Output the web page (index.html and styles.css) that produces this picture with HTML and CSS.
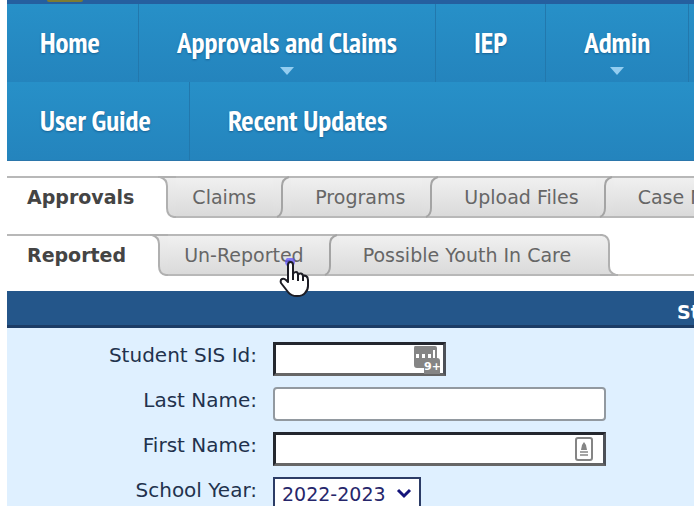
FILE: index.html
```html
<!DOCTYPE html>
<html lang="en">
<head>
    <meta charset="UTF-8">
    <meta name="viewport" content="width=device-width, initial-scale=1.0">
    <title>Approvals</title>
    <link rel="stylesheet" href="styles.css">
</head>
<body>
    <header class="banner">
        <span class="seal"></span>
    </header>

    <nav class="menu">
        <div class="menu-row">
            <a class="menu-item" href="#">Home</a>
            <a class="menu-item has-sub" href="#">Approvals and Claims</a>
            <a class="menu-item" href="#">IEP</a>
            <a class="menu-item has-sub" href="#">Admin</a>
        </div>
        <div class="menu-row">
            <a class="menu-item" href="#">User Guide</a>
            <a class="menu-item" href="#">Recent Updates</a>
        </div>
    </nav>

    <!-- shapes between two tabs -->
    <svg class="defs" width="0" height="0">
        <defs>
            <linearGradient id="tabFill" x1="0" y1="0" x2="0" y2="1">
                <stop offset="0" stop-color="#f0f0f0"/>
                <stop offset="1" stop-color="#dadada"/>
            </linearGradient>
            <symbol id="edge-selected" viewBox="0 0 18 42">
                <path d="M0 0H18V42H16Q9 40 9 32V10Q9 3 2 1H0Z" fill="url(#tabFill)"/>
                <path d="M0 1H18M2 1Q9 3 9 10V32Q9 40 16 41H18" fill="none" stroke="#b0b0b0" stroke-width="2"/>
            </symbol>
            <symbol id="edge-mid" viewBox="0 0 18 42">
                <rect width="18" height="42" fill="url(#tabFill)"/>
                <path d="M0 1H18M0 41H18" fill="none" stroke="#b8b8b8" stroke-width="2"/>
                <path d="M16 1Q9 3 9 10V32Q9 39 4 41" fill="none" stroke="#a4a4a4" stroke-width="2"/>
            </symbol>
            <symbol id="edge-last" viewBox="0 0 18 42">
                <path d="M0 0H2Q9 2 9 10V32Q9 39 16 41V42H0Z" fill="url(#tabFill)"/>
                <path d="M0 1H2Q9 2 9 10V32Q9 39 16 41H18M0 41H18" fill="none" stroke="#b0b0b0" stroke-width="2"/>
            </symbol>
        </defs>
    </svg>

    <div class="tabs main-tabs">
        <button class="tab selected">Approvals</button>
        <svg class="edge"><use href="#edge-selected"/></svg>
        <button class="tab next">Claims</button>
        <svg class="edge"><use href="#edge-mid"/></svg>
        <button class="tab">Programs</button>
        <svg class="edge"><use href="#edge-mid"/></svg>
        <button class="tab">Upload Files</button>
        <svg class="edge"><use href="#edge-mid"/></svg>
        <button class="tab">Case M</button>
    </div>

    <div class="tabs sub-tabs">
        <button class="tab selected">Reported</button>
        <svg class="edge"><use href="#edge-selected"/></svg>
        <button class="tab next">Un-Reported
            <svg class="pointer" width="32" height="40" viewBox="0 0 32 40">
                <circle cx="11" cy="4" r="5" fill="#5a4dff" opacity=".7"/>
                <path d="M9 24V7Q9 4 11.500 4Q14 4 14 7V16Q15 14 17 14Q19 14 19 17Q20 15 22 15.500Q24 16 24 18.500Q25 17 27 18Q29 19 29 22V28Q29 32 26 35Q24 38 18 38Q12 38 9 34L2 25Q1 22 3 21Q5 20 7 22Z" fill="#fff" stroke="#1c1c24" stroke-width="2" stroke-linejoin="round"/>
                <path d="M14 15V22M19 16V23M24 18V23" stroke="#1c1c24" stroke-width="2"/>
            </svg>
        </button>
        <svg class="edge"><use href="#edge-mid"/></svg>
        <button class="tab last">Possible Youth In Care</button>
        <svg class="edge"><use href="#edge-last"/></svg>
        <span class="tabs-rest"></span>
    </div>

    <main class="panel">
        <h2 class="panel-title"><span>St</span></h2>
        <form class="search">
            <label for="sisId">Student SIS Id:</label>
            <div class="field short">
                <input type="text" id="sisId" class="required">
                <svg class="field-icon" width="28" height="30" viewBox="0 0 28 30">
                    <path d="M2 1H22Q24 1 24 3V13Q27 13 27 16V29H11V23H4Q1 23 1 20V3Q1 1 2 1Z" fill="#858585"/>
                    <path d="M3 9H6V13H3ZM9 9H12V13H9ZM15 9H18V13H15ZM20 5H22V13H20Z" fill="#fff"/>
                    <text x="11" y="25" class="badge-text">9+</text>
                </svg>
            </div>

            <label for="lastName">Last Name:</label>
            <div class="field">
                <input type="text" id="lastName">
            </div>

            <label for="firstName">First Name:</label>
            <div class="field">
                <input type="text" id="firstName" class="required">
                <svg class="field-icon card-icon" width="18" height="24" viewBox="0 0 18 24">
                    <rect x="1" y="1" width="16" height="22" rx="2" fill="#fff" stroke="#858585" stroke-width="2"/>
                    <path d="M9 5L11 8L12 13H6L7 8Z" fill="#858585"/>
                    <path d="M5 15H13M5 18H13" stroke="#a5a5a5" stroke-width="2"/>
                </svg>
            </div>

            <label for="schoolYear">School Year:</label>
            <div class="field year">
                <select id="schoolYear">
                    <option>2022-2023</option>
                </select>
                <svg class="chevron" width="16" height="12" viewBox="0 0 16 12">
                    <path d="M2 2L8 8L14 2" fill="none" stroke="#14147a" stroke-width="3"/>
                </svg>
            </div>
        </form>
    </main>
</body>
</html>
```

FILE: styles.css
```css
* {
    box-sizing: border-box;
}

body {
    margin: 0;
    padding-left: 7px;
    background: #fff;
    font-family: "DejaVu Sans", Verdana, sans-serif;
    font-size: 19px;
    overflow: hidden;
}

.banner {
    height: 4px;
    padding-left: 40px;
    background: #255f9f;
    overflow: hidden;
}

.seal {
    display: block;
    width: 36px;
    height: 2px;
    border-radius: 0 0 18px 18px;
    background: #7d7c33;
}

.menu {
    background: #2486bf;
    border-bottom: 1px solid #2b76ab;
    font-family: "PT Sans Narrow", "Liberation Sans Narrow", "Open Sans Condensed", sans-serif;
}

.menu-row {
    display: flex;
    height: 78px;
    background: linear-gradient(#2790c8, #2484bd);
}

.menu-item {
    position: relative;
    padding: 0 38px;
    border-right: 1px solid #2278ad;
    color: #fff;
    font-size: 29px;
    font-weight: bold;
    line-height: 76px;
    text-decoration: none;
    text-shadow: 0 1px 2px rgba(0, 40, 80, 0.4);
    white-space: nowrap;
}

.menu-item:first-child {
    padding-left: 33px;
}

.menu-row:last-child .menu-item:last-child {
    border-right: none;
}

.has-sub::after {
    content: "";
    position: absolute;
    left: 50%;
    bottom: 7px;
    margin-left: -7px;
    border: 7px solid transparent;
    border-top: 8px solid #93cdf0;
    border-bottom: none;
}

.defs {
    position: absolute;
}

.tabs {
    display: flex;
    height: 42px;
}

.main-tabs {
    margin-top: 15px;
}

.sub-tabs {
    margin-top: 16px;
}

.tab {
    position: relative;
    flex: none;
    padding: 0 17px 0 24px;
    border: solid #b8b8b8;
    border-width: 2px 0;
    background: linear-gradient(#f0f0f0, #dadada);
    color: #666;
    font-family: inherit;
    font-size: 19px;
    line-height: 36px;
    white-space: nowrap;
}

.tab.selected {
    padding: 0 24px 0 20px;
    border-bottom-color: #fff;
    background: #fff;
    color: #444;
    font-weight: bold;
}

.tab.next {
    padding-left: 16px;
}

.tab.last {
    padding-right: 29px;
}

.edge {
    flex: none;
    width: 18px;
    height: 42px;
}

.tabs-rest {
    flex: 1;
    border-bottom: 2px solid #c8c6c2;
}

.pointer {
    position: absolute;
    right: 10px;
    top: 22px;
    z-index: 1;
}

.panel {
    margin-top: 15px;
    background: #dff0ff;
}

.panel-title {
    display: flex;
    justify-content: flex-end;
    height: 37px;
    margin: 0;
    border-bottom: 3px solid #1c3c66;
    background: #24568a;
    color: #fff;
    font-size: 19px;
    line-height: 42px;
}

.panel-title span {
    width: 17px;
    overflow: hidden;
}

.search {
    display: grid;
    grid-template-columns: 250px 1fr;
    gap: 11px 16px;
    padding: 14px 0 20px;
    color: #22324d;
}

.search label {
    font-size: 20px;
    line-height: 26px;
    text-align: right;
}

.field {
    position: relative;
    width: 333px;
    height: 34px;
}

.field.short {
    width: 173px;
}

.field.year {
    width: 148px;
}

.field input {
    width: 100%;
    height: 100%;
    padding: 2px 6px;
    border: 2px solid #9299a0;
    border-radius: 4px;
    background: #fff;
    font: inherit;
}

.field input.required {
    border: 3px solid #24272e;
    border-right-color: #4d5158;
    border-bottom-color: #666;
    border-radius: 0;
}

.field select {
    width: 100%;
    height: 100%;
    padding: 0 7px;
    border: 2px solid #2c3c66;
    border-radius: 0;
    background: #fff;
    color: #26266b;
    font: inherit;
    appearance: none;
}

.field-icon {
    position: absolute;
    top: 3px;
    right: 5px;
}

.card-icon {
    top: 5px;
    right: 13px;
}

.badge-text {
    fill: #fff;
    font-size: 11px;
    font-weight: bold;
}

.chevron {
    position: absolute;
    top: 11px;
    right: 9px;
    pointer-events: none;
}
```
